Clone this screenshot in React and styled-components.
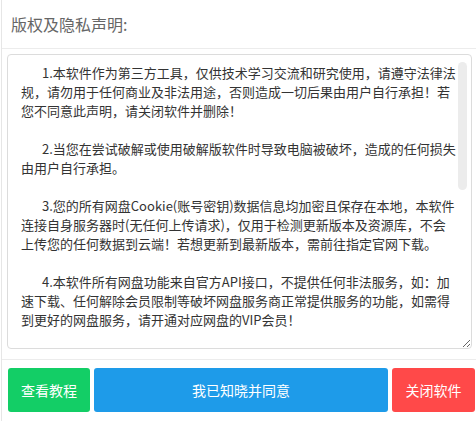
import React from 'react';
import styled, { createGlobalStyle } from 'styled-components';

const GlobalStyle = createGlobalStyle`
  html, body {
    margin: 0;
    padding: 0;
    background: #ffffff;
  }
  body {
    font-family: "Noto Sans CJK SC", "Noto Sans", sans-serif;
  }
`

const Panel = styled.div`
  margin-left: 1px;
  border-left: 1px solid #e6e6e6;
  height: 421px;
  box-sizing: border-box;
  display: flex;
  flex-direction: column;
`

const Header = styled.div`
  height: 48px;
  display: flex;
  align-items: center;
  padding-left: 9px;
  border-bottom: 1px solid #ececec;
  font-size: 16px;
  color: #666666;
`

const Body = styled.div`
  padding: 5px 4px 10px 5px;
  border-bottom: 1px solid #ececec;
`

const NoticeFrame = styled.div`
  position: relative;
`

const Notice = styled.div`
  height: 295px;
  box-sizing: border-box;
  border: 1px solid #dcdcdc;
  border-radius: 4px;
  padding: 8px 0 0 13px;
  overflow-y: auto;
  overflow-x: hidden;
  resize: vertical;
  scrollbar-width: none;
  color: #333333;
  font-size: 13px;
  line-height: 19px;
`

// scroll thumb drawn over the text box (native bars are hidden in capture)
const Thumb = styled.div`
  position: absolute;
  top: 8px;
  right: 5px;
  width: 9px;
  height: 128px;
  border-radius: 5px;
  background: #ececec;
  pointer-events: none;
`

const Para = styled.p`
  margin: 0 0 19px;
  white-space: nowrap;
`

const Line = styled.span`
  display: block;
  padding-left: ${p => (p.$first ? '21px' : '0')};
`

const Footer = styled.div`
  display: grid;
  grid-template-columns: 82px 1fr 83px;
  gap: 4px;
  padding: 8px 1px 0 6px;
`

const Button = styled.button`
  height: 44px;
  border: none;
  border-radius: 3px;
  background: ${p => p.$bg};
  color: #ffffff;
  font-family: "Noto Sans CJK SC", "Noto Sans", sans-serif;
  font-size: 14px;
  cursor: pointer;
`

const paragraphs = [
  [
    '1.本软件作为第三方工具，仅供技术学习交流和研究使用，请遵守法律法',
    '规，请勿用于任何商业及非法用途，否则造成一切后果由用户自行承担！若',
    '您不同意此声明，请关闭软件并删除！',
  ],
  [
    '2.当您在尝试破解或使用破解版软件时导致电脑被破坏，造成的任何损失',
    '由用户自行承担。',
  ],
  [
    '3.您的所有网盘Cookie(账号密钥)数据信息均加密且保存在本地，本软件',
    '连接自身服务器时(无任何上传请求)，仅用于检测更新版本及资源库，不会',
    '上传您的任何数据到云端！若想更新到最新版本，需前往指定官网下载。',
  ],
  [
    '4.本软件所有网盘功能来自官方API接口，不提供任何非法服务，如：加',
    '速下载、任何解除会员限制等破坏网盘服务商正常提供服务的功能，如需得',
    '到更好的网盘服务，请开通对应网盘的VIP会员！',
  ],
];

export default function App() {
  return (
    <>
      <GlobalStyle />
      <Panel>
        <Header>版权及隐私声明:</Header>
        <Body>
          <NoticeFrame>
            <Notice>
              {paragraphs.map((lines, i) => (
                <Para key={i}>
                  {lines.map((l, j) => (
                    <Line key={j} $first={j === 0}>{l}</Line>
                  ))}
                </Para>
              ))}
            </Notice>
            <Thumb />
          </NoticeFrame>
        </Body>
        <Footer>
          <Button $bg="#13ce66">查看教程</Button>
          <Button $bg="#1e9be9">我已知晓并同意</Button>
          <Button $bg="#ff4949">关闭软件</Button>
        </Footer>
      </Panel>
    </>
  );
}
